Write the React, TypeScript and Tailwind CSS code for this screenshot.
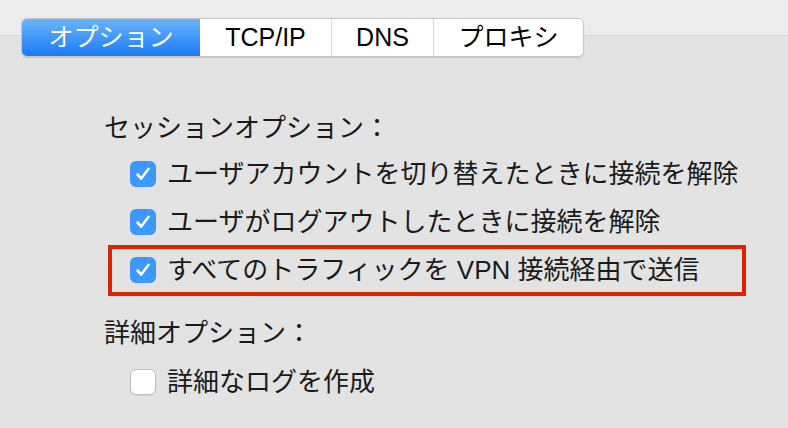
const font = "font-['Liberation_Sans','Noto_Sans_CJK_JP',sans-serif]";

function Check({ on }: { on: boolean }) {
  if (!on) {
    return (
      <span className="block h-[26px] w-[26px] shrink-0 rounded-[6px] border border-[#bdbdbd] bg-white shadow-[0_1px_1px_rgba(0,0,0,0.08)]" />
    );
  }
  return (
    <span className="flex h-[26px] w-[26px] shrink-0 items-center justify-center rounded-[6px] bg-[#3c99fb]">
      <svg width="18" height="18" viewBox="0 0 18 18" fill="none">
        <path d="M3.5 9.5 L7.2 13.5 L14.5 3.8" stroke="white" strokeWidth="2.6" strokeLinecap="round" strokeLinejoin="round" />
      </svg>
    </span>
  );
}

function Row({ on, label, marked }: { on: boolean; label: string; marked?: boolean }) {
  return (
    <div className="relative flex h-[48px] items-center gap-[11px] pl-[26px]">
      <Check on={on} />
      <span className="text-[26px] leading-none text-[#1a1a1a]">{label}</span>
      {marked && (
        <span className="pointer-events-none absolute left-[4px] top-[-1px] h-[51px] w-[638px] border-[4px] border-[#de2300]" />
      )}
    </div>
  );
}

const tabs = [
  { label: 'オプション', w: 'w-[178px]' },
  { label: 'TCP/IP', w: 'w-[131px]' },
  { label: 'DNS', w: 'w-[102px]' },
  { label: 'プロキシ', w: 'w-[150px]' },
];

export default function App() {
  return (
    <div className={`h-[428px] w-[788px] overflow-hidden bg-[#e3e3e3] ${font}`}>
      <div className="bg-[linear-gradient(to_bottom,#ececec_35px,#d3d3d3_35px,#d3d3d3_36px,#e3e3e3_36px)] pt-[18px]">
        <div className="ml-[21px] flex h-[39px] w-fit overflow-hidden rounded-[6px] border border-[#c6c6c6] shadow-[0_1px_1px_rgba(0,0,0,0.12)]">
          {tabs.map((t, i) => (
            <div
              key={t.label}
              className={`flex ${t.w} items-center justify-center text-[25px] leading-none ${
                i === 0
                  ? 'bg-[linear-gradient(to_bottom,#6ab4fb,#1a7bf6)] text-white'
                  : 'bg-white text-black'
              } ${i > 1 ? 'border-l border-[#d8d8d8]' : ''}`}
            >
              {t.label}
            </div>
          ))}
        </div>
      </div>

      <div className="pl-[104px] pt-[58px]">
        <div className="text-[26px] leading-none text-[#1a1a1a]">セッションオプション：</div>
        <div className="mt-[9px]">
          <Row on label="ユーザアカウントを切り替えたときに接続を解除" />
          <Row on label="ユーザがログアウトしたときに接続を解除" />
          <Row on marked label="すべてのトラフィックを VPN 接続経由で送信" />
        </div>
        <div className="mt-[26px] text-[26px] leading-none text-[#1a1a1a]">詳細オプション：</div>
        <div className="mt-[12px]">
          <Row on={false} label="詳細なログを作成" />
        </div>
      </div>
    </div>
  );
}
